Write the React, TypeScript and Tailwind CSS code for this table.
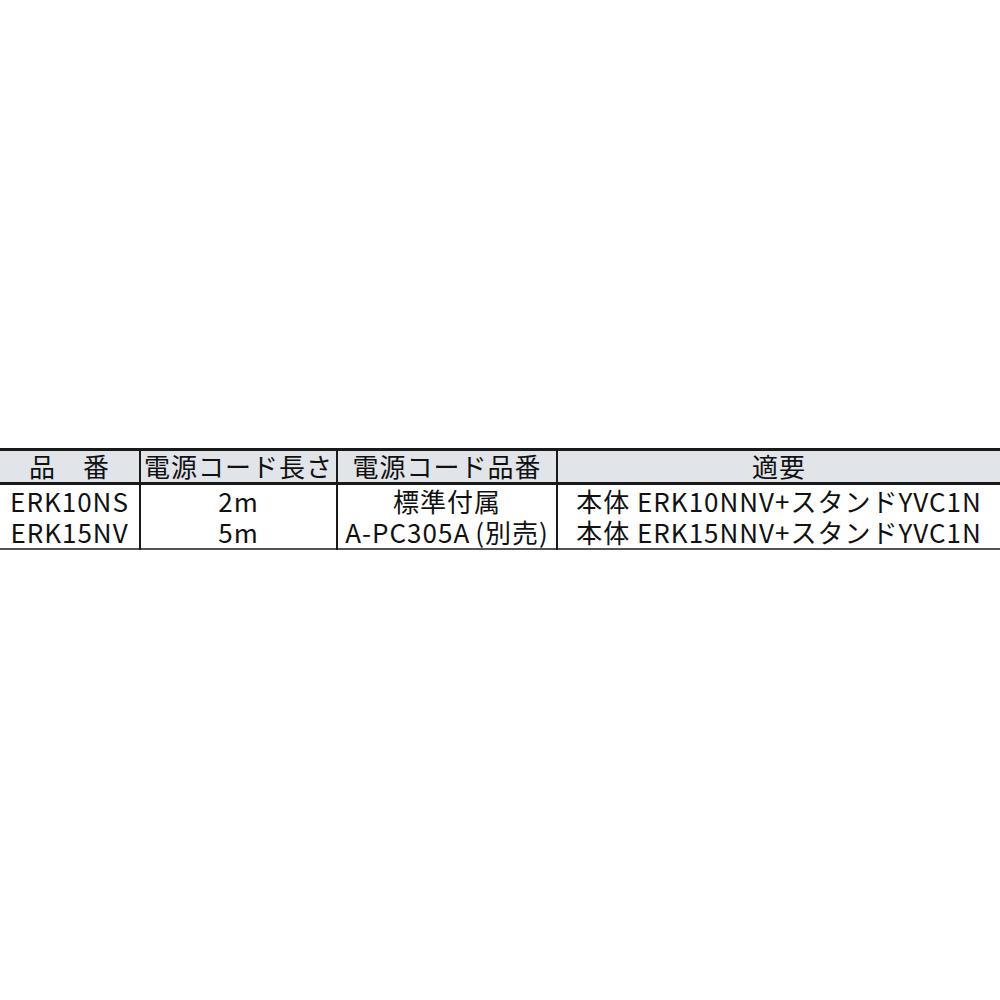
import React from 'react';

const rows = [
    { code: 'ERK10NS', len: '2m', cord: <>標準付属</>, note: '本体 ERK10NNV+スタンドYVC1N' },
    { code: 'ERK15NV', len: '5m', cord: <>A-PC305A<span className="ml-[5px]">(別売)</span></>, note: '本体 ERK15NNV+スタンドYVC1N' },
];

export default function App() {
    return (
        <div className="w-[1000px] h-[1000px] bg-white flex flex-col justify-center" style={{ fontFamily: '"Noto Sans CJK JP", "Noto Sans", sans-serif' }}>
            <table className="w-full border-collapse text-[#111] text-[26px] leading-[30px] tracking-[1px] mt-[-2px]">
                <colgroup>
                    <col className="w-[140px]" />
                    <col className="w-[197px]" />
                    <col className="w-[220px]" />
                    <col />
                </colgroup>
                <thead>
                    <tr className="bg-[#e1e4e9] border-t-[3px] border-b-[3px] border-[#1a1a1a] h-[34px]">
                        <th className="font-normal text-center">品　番</th>
                        <th className="font-normal text-center border-l-2 border-[#1a1a1a]">電源コード長さ</th>
                        <th className="font-normal text-center border-l-2 border-[#1a1a1a]">電源コード品番</th>
                        <th className="font-normal text-center border-l-2 border-[#1a1a1a]">適要</th>
                    </tr>
                </thead>
                <tbody className="border-b-2 border-[#555]">
                    {rows.map((r) => (
                        <tr key={r.code} className="h-[33px]">
                            <td className="text-center">{r.code}</td>
                            <td className="text-center border-l-2 border-[#1a1a1a]">{r.len}</td>
                            <td className="text-center border-l-2 border-[#1a1a1a] whitespace-nowrap">{r.cord}</td>
                            <td className="text-center border-l-2 border-[#1a1a1a] whitespace-nowrap">{r.note}</td>
                        </tr>
                    ))}
                </tbody>
            </table>
        </div>
    );
}
